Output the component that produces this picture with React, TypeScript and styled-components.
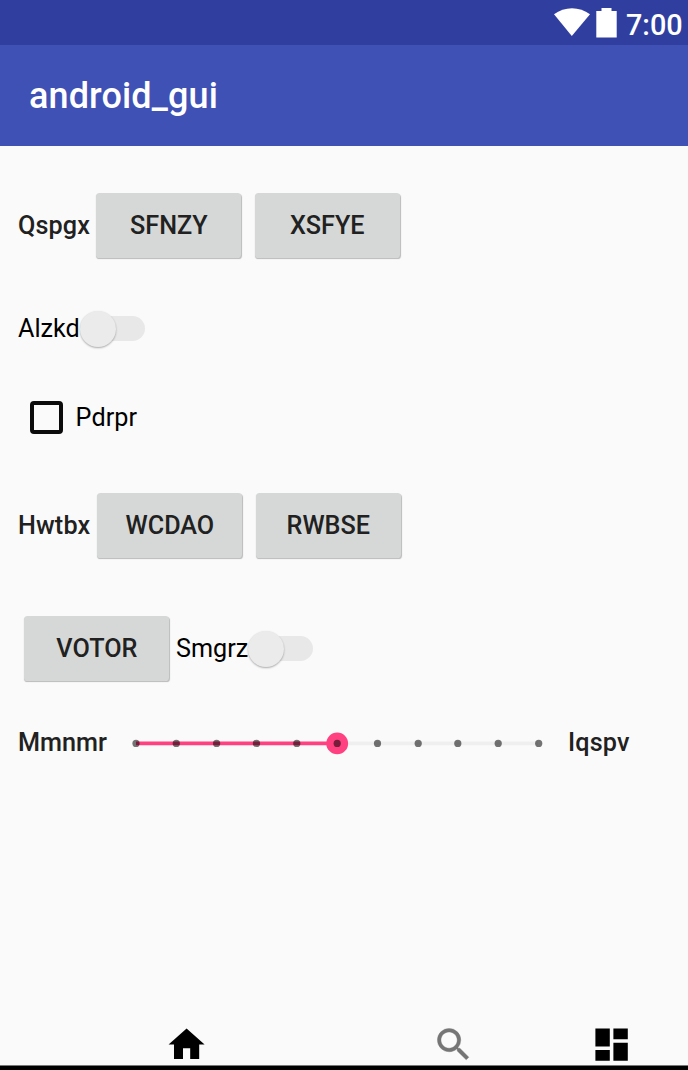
import React from "react";
import styled, { createGlobalStyle } from "styled-components";

const GlobalStyle = createGlobalStyle`
  * { box-sizing: border-box; }
  body { margin: 0; background: #fafafa; font-family: Roboto, "Noto Sans", sans-serif; }
`;

const Screen = styled.div`
  display: flex;
  flex-direction: column;
  width: 688px;
  height: 1070px;
  overflow: hidden;
  background: #fafafa;
`;

const StatusBar = styled.header`
  display: flex;
  justify-content: flex-end;
  height: 45px;
  flex: none;
  padding-right: 6px;
  background: #303f9f;
  color: #fff;
`;

const StatusIcons = styled.svg`
  display: block;
  width: 66px;
  height: 45px;
  margin-right: 8px;
`;

const Clock = styled.time`
  width: 56px;
  font-size: 28.8px;
  font-weight: 500;
  line-height: 51px;
  white-space: nowrap;
`;

const AppBar = styled.div`
  display: flex;
  align-items: center;
  height: 101px;
  flex: none;
  padding-left: 29px;
  background: #3f51b5;
`;

const Title = styled.h1`
  margin: 0;
  color: #fff;
  font-size: 36px;
  font-weight: 500;
  line-height: 42px;
  letter-spacing: 0.12px;
`;

const Content = styled.main`
  flex: 1;
  padding-left: 18px;
`;

const Row = styled.div<{ $gap: number; $height: number; $indent?: number }>`
  display: flex;
  align-items: center;
  margin-top: ${(p) => p.$gap}px;
  height: ${(p) => p.$height}px;
  padding-left: ${(p) => p.$indent ?? 0}px;
`;

const Label = styled.span<{ $width: number; $regular?: boolean; $spacing?: number }>`
  flex: none;
  width: ${(p) => p.$width}px;
  font-size: 25.2px;
  line-height: 30px;
  font-weight: ${(p) => (p.$regular ? 400 : 500)};
  color: ${(p) => (p.$regular ? "#000" : "#212121")};
  letter-spacing: ${(p) => p.$spacing ?? 0}px;
  white-space: nowrap;
`;

const Button = styled.button<{ $after?: number }>`
  flex: none;
  width: 145px;
  height: 65px;
  margin: 0 ${(p) => p.$after ?? 13.4}px 0 0;
  padding: 0;
  border: 0;
  border-radius: 3.6px;
  background: #d6d8d7;
  box-shadow: 0.3px 1px 1px rgba(0, 0, 0, 0.26);
  color: #212121;
  font: 500 25.2px/30px Roboto, sans-serif;
`;

const SwitchTrack = styled.span`
  display: flex;
  align-items: center;
  width: 63px;
  height: 25px;
  border-radius: 13px;
  background: #e8e8e8;
`;

const SwitchThumb = styled.span`
  flex: none;
  width: 36px;
  height: 36px;
  margin: 0 0 0 -2px;
  border-radius: 50%;
  background: #ebebeb;
  box-shadow: 0 1px 2px rgba(0, 0, 0, 0.32);
`;

const CheckBox = styled.span`
  width: 33px;
  height: 33px;
  margin-right: 12.4px;
  border: 4px solid #0b0b0b;
  border-radius: 4px;
`;

const Slider = styled.svg`
  display: block;
  width: 424px;
  height: 30px;
  margin-right: 20px;
`;

const BottomBar = styled.nav`
  display: flex;
  height: 55px;
  flex: none;
  padding: 8px 0 0 165px;
  background: linear-gradient(#fafafa 50px, #777 50px, #777 51px, #000 51px);
`;

const NavIcon = styled.svg<{ $color: string; $space: number }>`
  flex: none;
  width: 43.2px;
  height: 43.2px;
  margin-right: ${(p) => p.$space}px;
  fill: ${(p) => p.$color};
`;

const Switch = () => (
  <SwitchTrack role="switch" aria-checked="false">
    <SwitchThumb />
  </SwitchTrack>
);

const ticks = [12, 52.3, 92.6, 132.5, 172.8, 213.2, 253.5, 294.2, 333.8, 374.2, 414.7];

export default function App() {
  return (
    <Screen>
      <GlobalStyle />
      <StatusBar>
        <StatusIcons viewBox="552 0 66 45" fill="#fff">
          <path d="M554 14.2C564.5 6.2 579.5 6.2 590 14.2L571.8 36Z" />
          <path d="M596.3 11H601.5V8H611.5V11H616.7V37.5H596.3Z" />
        </StatusIcons>
        <Clock>7:00</Clock>
      </StatusBar>
      <AppBar>
        <Title>android_gui</Title>
      </AppBar>
      <Content>
        <Row $gap={47} $height={65}>
          <Label $width={78.4} $spacing={0.1}>Qspgx</Label>
          <Button>SFNZY</Button>
          <Button>XSFYE</Button>
        </Row>
        <Row $gap={52} $height={37}>
          <Label $width={64} $regular>Alzkd</Label>
          <Switch />
        </Row>
        <Row $gap={54} $height={33} $indent={12.2}>
          <CheckBox role="checkbox" aria-checked="false" />
          <Label $width={62} $regular $spacing={0.1}>Pdrpr</Label>
        </Row>
        <Row $gap={59} $height={65}>
          <Label $width={79.4} $spacing={0.15}>Hwtbx</Label>
          <Button>WCDAO</Button>
          <Button>RWBSE</Button>
        </Row>
        <Row $gap={58} $height={65} $indent={6.4}>
          <Button $after={6.6}>VOTOR</Button>
          <Label $width={74} $regular>Smgrz</Label>
          <Switch />
        </Row>
        <Row $gap={46} $height={32}>
          <Label $width={106}>Mmnmr</Label>
          <Slider viewBox="0 0 424 30">
            <path d="M213 15.4H414" stroke="#efefef" strokeWidth="3.6" />
            <path d="M12 15.4H213" stroke="#ff4081" strokeWidth="3.6" />
            <circle cx="213.2" cy="15.4" r="10.9" fill="#ff4081" />
            {ticks.map((x) => (
              <circle key={x} cx={x} cy="15.4" r="3.6" fill="#000" fillOpacity="0.54" />
            ))}
          </Slider>
          <Label $width={62} $spacing={0.15}>Iqspv</Label>
        </Row>
      </Content>
      <BottomBar>
        <NavIcon viewBox="0 0 24 24" $color="#000" $space={224}>
          <path d="M10 20v-6h4v6h5v-8h3L12 3 2 12h3v8z" />
        </NavIcon>
        <NavIcon viewBox="0 0 24 24" $color="#757575" $space={115}>
          <path stroke="#757575" strokeWidth="0.2" d="M15.5 14h-.79l-.28-.27A6.471 6.471 0 0 0 16 9.5 6.5 6.5 0 1 0 9.5 16c1.61 0 3.09-.59 4.23-1.57l.27.28v.79l5 4.99L20.49 19l-4.99-5zm-6 0C7.01 14 5 11.99 5 9.5S7.01 5 9.5 5 14 7.01 14 9.5 11.99 14 9.5 14z" />
        </NavIcon>
        <NavIcon viewBox="0 0 24 24" $color="#000" $space={0}>
          <path d="M3 13h8V3H3v10zm0 8h8v-6H3v6zm10 0h8V11h-8v10zm0-18v6h8V3h-8z" />
        </NavIcon>
      </BottomBar>
    </Screen>
  );
}
